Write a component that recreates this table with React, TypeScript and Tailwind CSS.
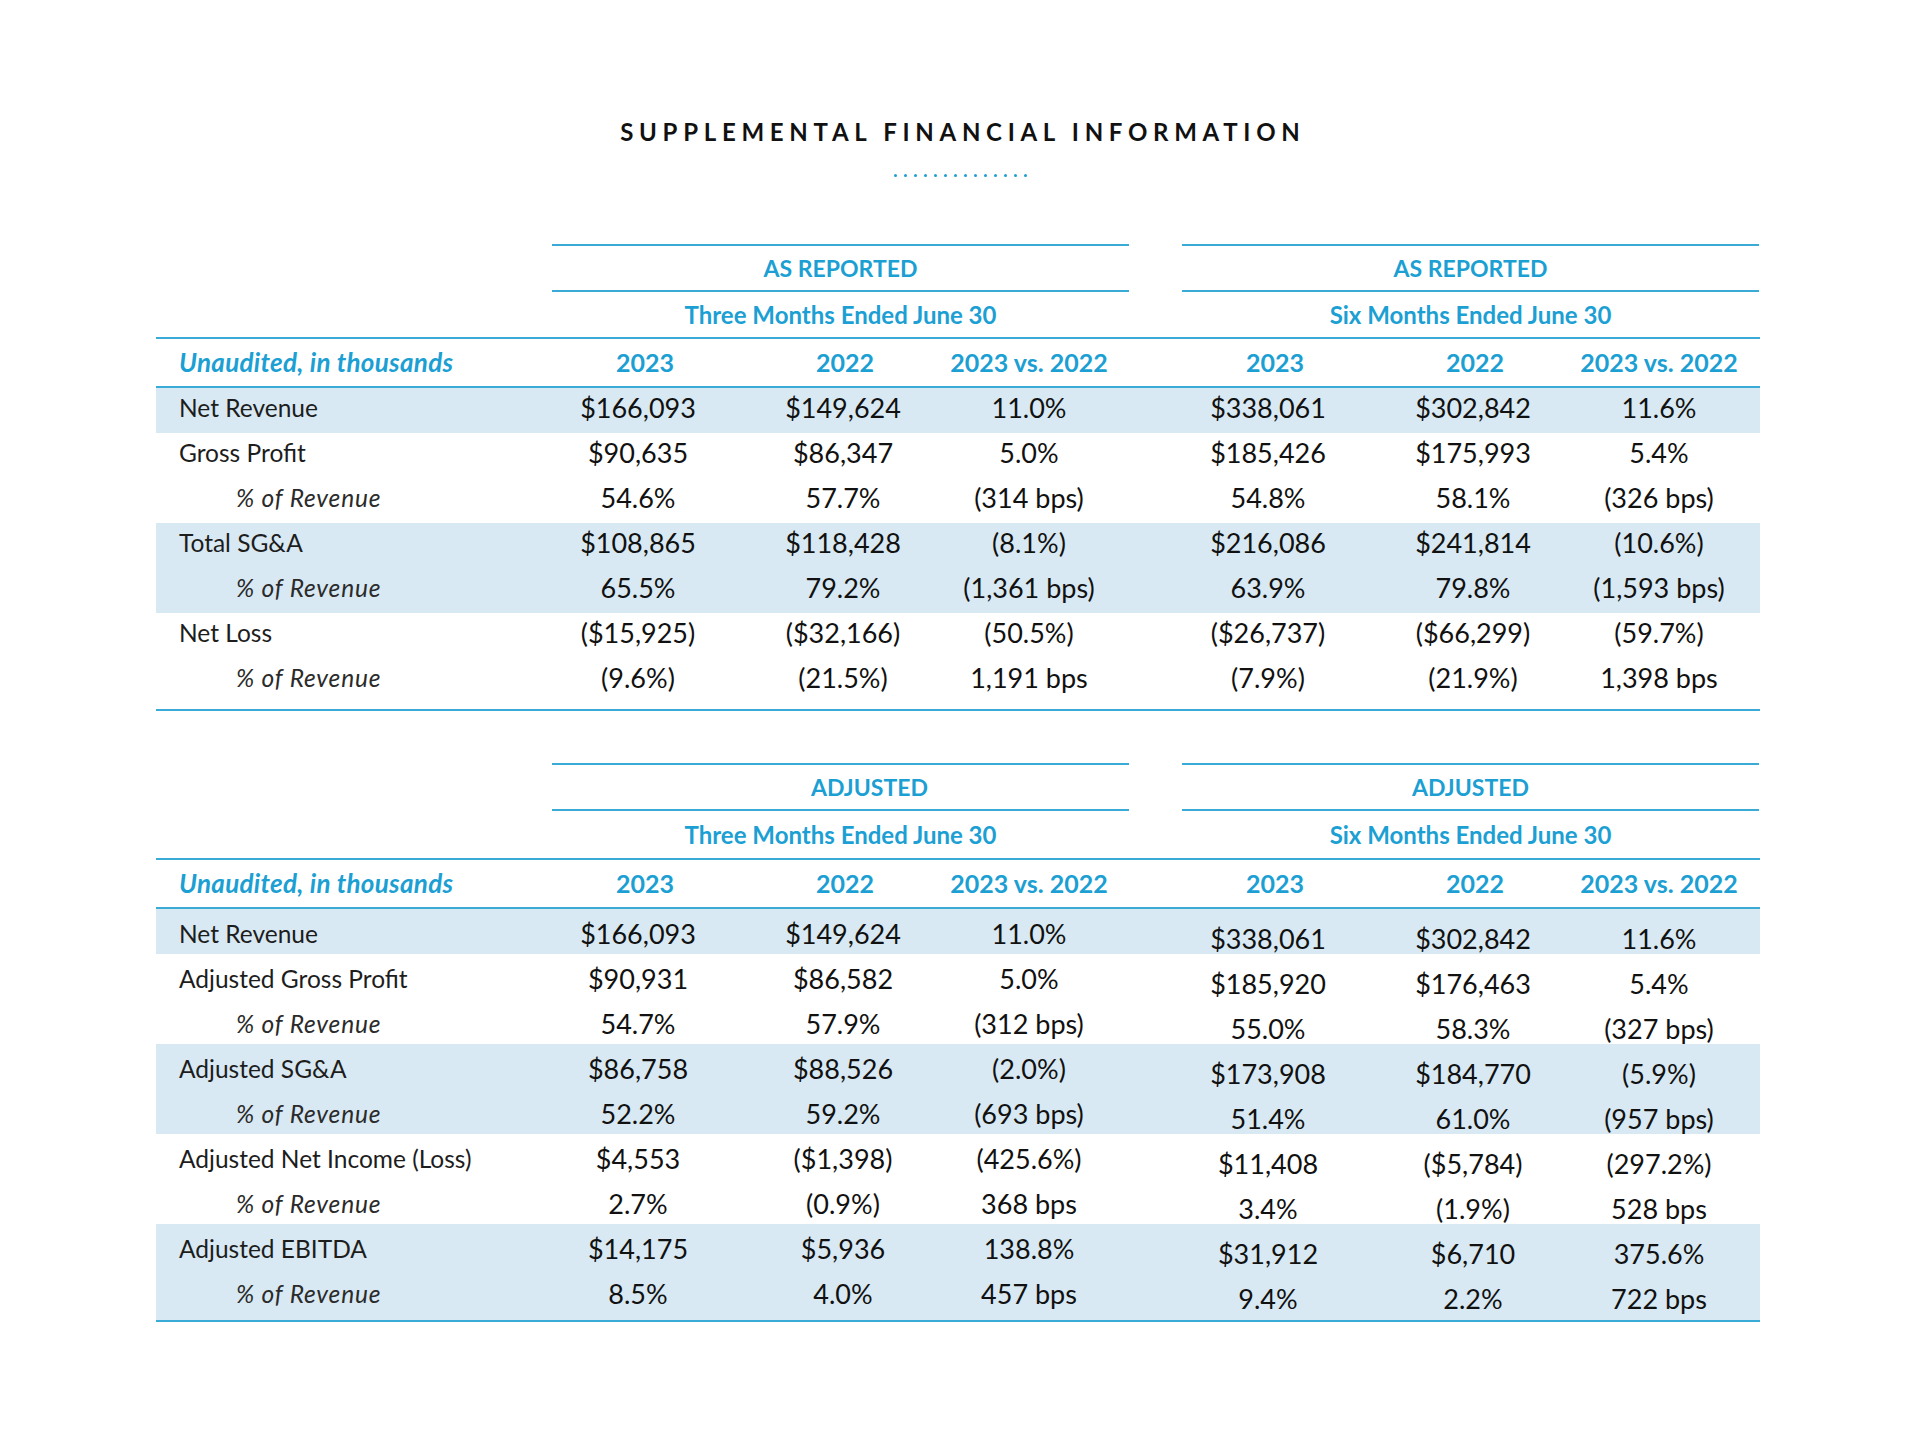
type Row = {
  label: string
  sub?: boolean
  band?: boolean
  a: string[]
  b: string[]
}

const reported: Row[] = [
  { label: "Net Revenue", band: true, a: ["$166,093", "$149,624", "11.0%"], b: ["$338,061", "$302,842", "11.6%"] },
  { label: "Gross Profit", a: ["$90,635", "$86,347", "5.0%"], b: ["$185,426", "$175,993", "5.4%"] },
  { label: "% of Revenue", sub: true, a: ["54.6%", "57.7%", "(314 bps)"], b: ["54.8%", "58.1%", "(326 bps)"] },
  { label: "Total SG&A", band: true, a: ["$108,865", "$118,428", "(8.1%)"], b: ["$216,086", "$241,814", "(10.6%)"] },
  { label: "% of Revenue", sub: true, band: true, a: ["65.5%", "79.2%", "(1,361 bps)"], b: ["63.9%", "79.8%", "(1,593 bps)"] },
  { label: "Net Loss", a: ["($15,925)", "($32,166)", "(50.5%)"], b: ["($26,737)", "($66,299)", "(59.7%)"] },
  { label: "% of Revenue", sub: true, a: ["(9.6%)", "(21.5%)", "1,191 bps"], b: ["(7.9%)", "(21.9%)", "1,398 bps"] },
]

const adjusted: Row[] = [
  { label: "Net Revenue", band: true, a: ["$166,093", "$149,624", "11.0%"], b: ["$338,061", "$302,842", "11.6%"] },
  { label: "Adjusted Gross Profit", a: ["$90,931", "$86,582", "5.0%"], b: ["$185,920", "$176,463", "5.4%"] },
  { label: "% of Revenue", sub: true, a: ["54.7%", "57.9%", "(312 bps)"], b: ["55.0%", "58.3%", "(327 bps)"] },
  { label: "Adjusted SG&A", band: true, a: ["$86,758", "$88,526", "(2.0%)"], b: ["$173,908", "$184,770", "(5.9%)"] },
  { label: "% of Revenue", sub: true, band: true, a: ["52.2%", "59.2%", "(693 bps)"], b: ["51.4%", "61.0%", "(957 bps)"] },
  { label: "Adjusted Net Income (Loss)", a: ["$4,553", "($1,398)", "(425.6%)"], b: ["$11,408", "($5,784)", "(297.2%)"] },
  { label: "% of Revenue", sub: true, a: ["2.7%", "(0.9%)", "368 bps"], b: ["3.4%", "(1.9%)", "528 bps"] },
  { label: "Adjusted EBITDA", band: true, a: ["$14,175", "$5,936", "138.8%"], b: ["$31,912", "$6,710", "375.6%"] },
  { label: "% of Revenue", sub: true, band: true, a: ["8.5%", "4.0%", "457 bps"], b: ["9.4%", "2.2%", "722 bps"] },
]

function Values({ vals, shift }: { vals: string[]; shift?: boolean }) {
  return (
    <div className={`grid grid-cols-[186px_214px_154px_23px] h-full ${shift ? "pt-[10px]" : ""}`}>
      <div className="flex items-center justify-center pr-[14px]">{vals[0]}</div>
      <div className="flex items-center justify-center pr-[4px]">{vals[1]}</div>
      <div className="flex items-center justify-center">{vals[2]}</div>
      <div />
    </div>
  )
}

function Table({
  title,
  rows,
  titleShift,
  shiftRight,
  heights,
}: {
  title: string
  rows: Row[]
  titleShift?: boolean
  shiftRight?: boolean
  heights: string[]
}) {
  return (
    <div className="ml-[156px] w-[1604px]">
      {/* group titles */}
      <div className={`grid grid-cols-[396px_577px_53px_577px] ${heights[0]}`}>
        <div />
        <div className={`flex items-center justify-center border-y-2 border-[#3aaad6] text-[23px] font-bold text-[#1c9fd3] ${titleShift ? "pl-[58px]" : ""}`}>
          {title}
        </div>
        <div />
        <div className="flex items-center justify-center border-y-2 border-[#3aaad6] text-[23px] font-bold text-[#1c9fd3]">
          {title}
        </div>
      </div>
      {/* period row */}
      <div className={`grid grid-cols-[396px_577px_53px_577px] ${heights[1]} border-b-2 border-[#3aaad6] text-[24px] font-bold text-[#1c9fd3]`}>
        <div />
        <div className="flex items-center justify-center">Three Months Ended June 30</div>
        <div />
        <div className="flex items-center justify-center">Six Months Ended June 30</div>
      </div>
      {/* column headers */}
      <div className={`grid grid-cols-[396px_577px_53px_577px] ${heights[2]} border-b-2 border-[#3aaad6] text-[25px] font-bold text-[#1c9fd3]`}>
        <div className="flex items-center pl-[23px] italic text-[26px] tracking-[0.3px] whitespace-nowrap">Unaudited, in thousands</div>
        {[0, 1].map((g) => (
          <div key={g} className={`grid grid-cols-[186px_214px_154px_23px] ${g === 1 ? "col-start-4" : ""}`}>
            <div className="flex items-center justify-center">2023</div>
            <div className="flex items-center justify-center">2022</div>
            <div className="flex items-center justify-center whitespace-nowrap">2023 vs. 2022</div>
            <div />
          </div>
        ))}
      </div>
      {/* data */}
      <div className="border-b-2 border-[#3aaad6]">
        {rows.map((r, i) => {
          const last = i === rows.length - 1
          return (
            <div
              key={i}
              className={`grid grid-cols-[396px_577px_53px_577px] ${last ? "h-[51px] pb-[12px]" : "h-[45px] pb-[6px]"} ${r.band ? "bg-[#d8e9f3]" : ""}`}
            >
              <div
                className={`flex items-center text-[24.5px] whitespace-nowrap ${r.sub ? "pl-[80px] italic tracking-[0.8px] text-[#2b2b2b]" : "pl-[23px] text-[#1d1d1d]"}`}
              >
                {r.label}
              </div>
              <div className="text-[27px] text-[#111]">
                <Values vals={r.a} />
              </div>
              <div />
              <div className="text-[27px] text-[#111]">
                <Values vals={r.b} shift={shiftRight} />
              </div>
            </div>
          )
        })}
      </div>
    </div>
  )
}

export default function App() {
  return (
    <div className="min-h-screen w-[1920px] bg-white font-['Lato',sans-serif] pt-[114px]">
      <h1 className="text-center text-[24px] leading-[36px] font-bold tracking-[5.7px] text-[#111] pl-[5.7px]">
        SUPPLEMENTAL FINANCIAL INFORMATION
      </h1>
      <div className="mt-[24px] flex justify-center gap-[7px]">
        {Array.from({ length: 14 }).map((_, i) => (
          <span key={i} className="block w-[3px] h-[3px] rounded-full bg-[#1c9fd3]" />
        ))}
      </div>
      <div className="mt-[67px]">
        <Table title="AS REPORTED" rows={reported} heights={["h-[48px]", "h-[47px]", "h-[49px]"]} />
      </div>
      <div className="mt-[52px]">
        <Table
          title="ADJUSTED"
          rows={adjusted}
          titleShift
          shiftRight
          heights={["h-[48px]", "h-[49px]", "h-[49px]"]}
        />
      </div>
    </div>
  )
}
